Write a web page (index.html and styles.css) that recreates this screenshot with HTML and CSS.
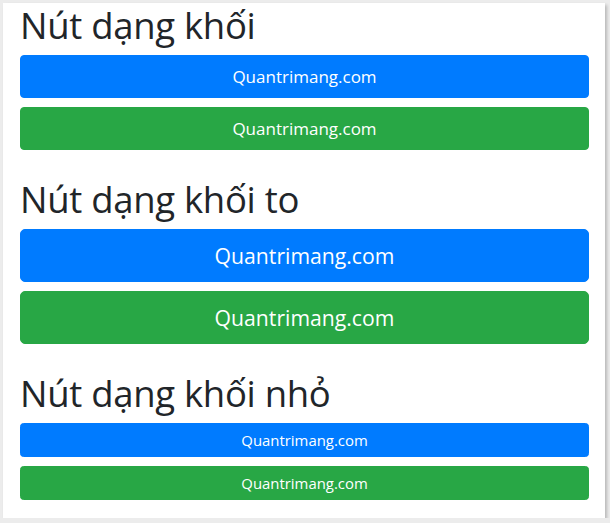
FILE: index.html
```html
<!DOCTYPE html>
<html lang="vi">
<head>
<meta charset="UTF-8">
<meta name="viewport" content="width=device-width, initial-scale=1">
<title>Nút dạng khối</title>
<link rel="stylesheet" href="styles.css">
</head>
<body>

<!-- page -->
<div class="page">

	<!-- block buttons -->
	<div class="group">
		<h2>Nút dạng khối</h2>
		<button type="button" class="btn btn-primary btn-block">Quantrimang.com</button>
		<button type="button" class="btn btn-success btn-block">Quantrimang.com</button>
	</div>

	<!-- large block buttons -->
	<div class="group">
		<h2>Nút dạng khối to</h2>
		<button type="button" class="btn btn-primary btn-lg btn-block">Quantrimang.com</button>
		<button type="button" class="btn btn-success btn-lg btn-block">Quantrimang.com</button>
	</div>

	<!-- small block buttons -->
	<div class="group">
		<h2>Nút dạng khối nhỏ</h2>
		<button type="button" class="btn btn-primary btn-sm btn-block">Quantrimang.com</button>
		<button type="button" class="btn btn-success btn-sm btn-block">Quantrimang.com</button>
	</div>

</div>
<!-- /page -->

</body>
</html>
```

FILE: styles.css
```css
/* -------------------------------------
		GLOBAL
------------------------------------- */
* {
	margin: 0;
	padding: 0;
	box-sizing: border-box;
}

body {
	background: #ececec;
	font-family: "Open Sans", "Noto Sans", Arial, sans-serif;
	color: #212529;
	padding: 3px 0 0 3px;
}

/* -------------------------------------
		PAGE
------------------------------------- */
.page {
	width: 602px;
	background: #fff;
	padding: 0 16px 18px 17px;
	box-shadow: 2px 2px 3px rgba(0, 0, 0, 0.22);
	display: flex;
	flex-direction: column;
	gap: 27px;
}

.group {
	display: flex;
	flex-direction: column;
	gap: 9px;
}

/* -------------------------------------
		TYPOGRAPHY
------------------------------------- */
h2 {
	font-size: 36.5px;
	font-weight: 500;
	line-height: 42px;
	letter-spacing: -0.3px;
	margin-top: 1px;
}

/* -------------------------------------
		BUTTONS
------------------------------------- */
.btn {
	display: block;
	width: 100%;
	border: 1px solid transparent;
	color: #fff;
	font-family: inherit;
	font-weight: 400;
	text-align: center;
	cursor: pointer;
	font-size: 17px;
	line-height: 27px;
	padding: 7px 13px;
	border-radius: 4px;
}

.btn-primary {
	background-color: #007bff;
	border-color: #007bff;
}

.btn-success {
	background-color: #28a745;
	border-color: #28a745;
}

.btn-lg {
	font-size: 21.2px;
	line-height: 33px;
	padding: 9px 18px;
	border-radius: 5px;
}

.btn-sm {
	font-size: 14.9px;
	line-height: 23px;
	padding: 4.5px 9px;
	border-radius: 3.5px;
}
```
